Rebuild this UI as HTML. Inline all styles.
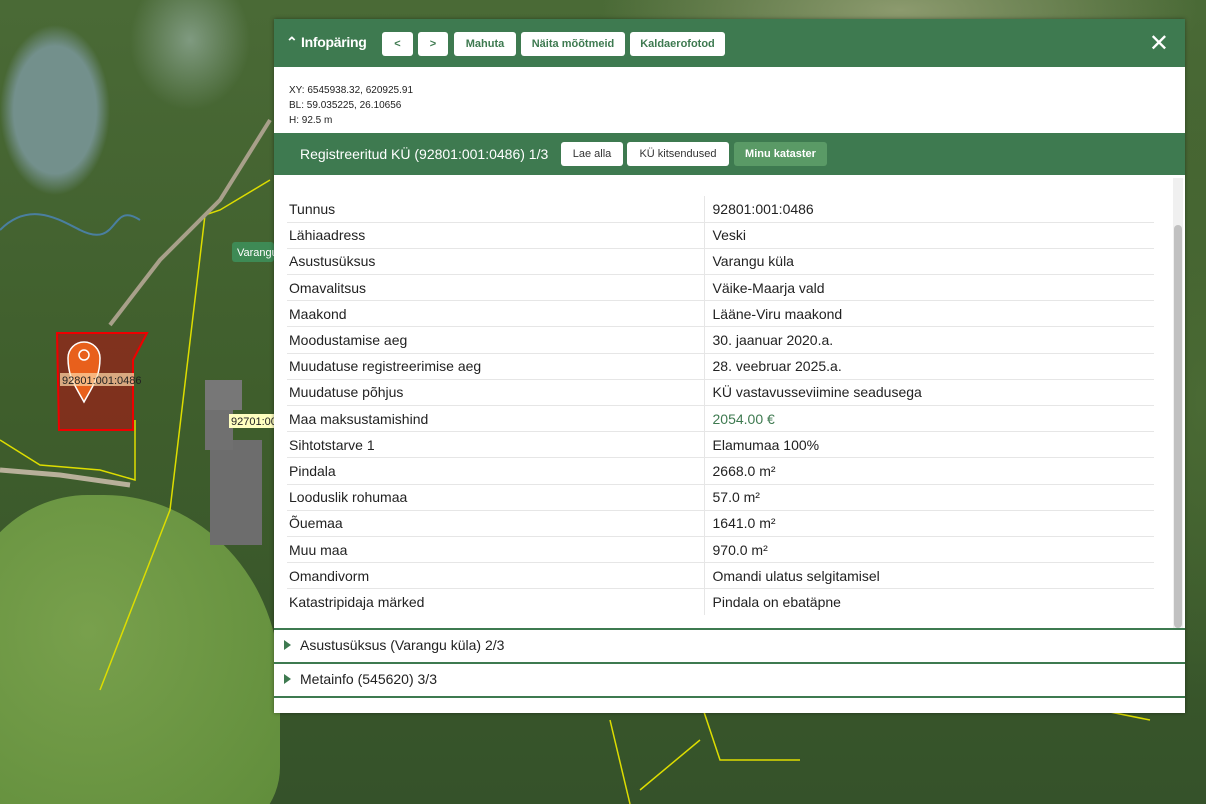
<!DOCTYPE html>
<html><head><meta charset="utf-8"><style>
*{margin:0;padding:0;box-sizing:border-box}
html,body{width:1206px;height:804px;overflow:hidden}
body{position:relative;font-family:"Liberation Sans",sans-serif;background:#3e5a2c}
.map{position:absolute;left:0;top:0;width:1206px;height:804px;overflow:hidden;background:
radial-gradient(ellipse 55px 85px at 55px 110px,#73908c 0,#73908c 75%,transparent 100%),
radial-gradient(ellipse 60px 70px at 190px 40px,#7f9a80 0,transparent 100%),
radial-gradient(ellipse 300px 90px at 900px 10px,#8c9a6e 0,transparent 100%),
radial-gradient(ellipse 90px 300px at 1200px 400px,#4a6a34 0,transparent 100%),
linear-gradient(180deg,#4a6a36,#3f5e2c 50%,#35522a)}
.field{position:absolute;left:-40px;top:495px;width:320px;height:340px;background:radial-gradient(ellipse at 40% 40%,#78a04c,#5f8c3a);border-radius:40% 55% 20% 10%}
.panel{position:absolute;left:274px;top:19px;width:911px;height:694px;background:#fff;box-shadow:0 0 4px rgba(0,0,0,.4)}
.hdr{height:48px;background:#3e7a50;position:relative}
.hdr .t{position:absolute;left:12px;top:15px;color:#fff;font-weight:bold;font-size:14px;letter-spacing:-.3px}
.btn{position:absolute;background:#fff;color:#3e7a50;font-size:11px;font-weight:bold;border-radius:3px;height:24px;line-height:24px;text-align:center}
.x{position:absolute;right:16px;top:10px;color:#fff;font-size:24px}
.info{height:66px;padding:16px 0 0 15px;font-size:10px;line-height:15px;color:#222}
.sub{height:42px;background:#3e7a50;position:relative}
.sub .t{position:absolute;left:26px;top:13px;color:#fff;font-size:14px}
table{position:absolute;left:13px;top:177px;width:867px;border-collapse:collapse;font-size:14px;color:#222}
td{height:26.2px;border-bottom:1px solid #e6e6e6;padding-left:2px}
td+td{border-left:1px solid #e6e6e6;padding-left:8px;width:450px}
tr:last-child td{border-bottom:none}
.sb{position:absolute;left:899px;top:159px;width:10px;height:450px;background:#f0f0f0}
.sb div{position:absolute;left:1px;top:47px;width:8px;height:403px;background:#c1c1c1;border-radius:4px}
.acc{position:absolute;left:0;width:911px;height:34px;border-top:2px solid #3e7a50;font-size:14px;color:#222;padding:7px 0 0 26px}
.acc:before{content:"";position:absolute;left:10px;top:10px;border-left:7px solid #3e7a50;border-top:5px solid transparent;border-bottom:5px solid transparent}
</style></head><body>
<div class="map">
<div class="field"></div>
<svg width="1206" height="804" style="position:absolute;left:0;top:0">
<polyline points="0,440 40,465 100,470 135,480 135,420" fill="none" stroke="#dddd00" stroke-width="1.5"/>
<polyline points="100,690 135,600 170,510 205,215 220,210 270,180" fill="none" stroke="#dddd00" stroke-width="1.5"/>
<polyline points="0,470 60,475 130,485" fill="none" stroke="#b8b09a" stroke-width="5"/>
<polyline points="110,325 160,260 220,200 270,120" fill="none" stroke="#a8a08a" stroke-width="4"/>
<path d="M0,230 C30,200 60,220 80,230 C120,250 110,200 140,220" fill="none" stroke="#4a7fa0" stroke-width="2"/>
<path d="M700,740 L640,790 M700,700 L720,760 L800,760 M610,720 L630,804 M1100,710 L1150,720" fill="none" stroke="#dddd00" stroke-width="1.5"/>
<polygon points="57,333 147,333 133,360 133,430 59,430" fill="rgba(170,20,20,.6)" stroke="#e00" stroke-width="2"/>
<rect x="205" y="380" width="37" height="30" fill="#777"/><rect x="210" y="440" width="52" height="105" fill="#6d6d6d"/><rect x="205" y="410" width="28" height="40" fill="#707070"/>
<path d="M84,402 C74,384 68,376 68,358 A16,16 0 0 1 100,358 C100,376 94,384 84,402Z" fill="#e8601c" stroke="#fff" stroke-width="1.5"/>
<circle cx="84" cy="355" r="5" fill="none" stroke="#fff" stroke-width="1.5"/>
<rect x="60" y="373" width="74" height="13" fill="rgba(255,220,170,.7)"/><text x="62" y="384" font-size="11" font-family="Liberation Sans" fill="#222">92801:001:0486</text>
<rect x="229" y="414" width="45" height="14" fill="#ffffc0"/><text x="231" y="425" font-size="11" font-family="Liberation Sans" fill="#222">92701:00</text>
<rect x="232" y="242" width="42" height="20" rx="3" fill="#3e8a55"/><text x="237" y="256" font-size="11" font-family="Liberation Sans" fill="#fff">Varangu</text>
</svg></div>
<div class="panel">
<div class="hdr"><div class="t">&#8963; Infopäring</div>
<div class="btn" style="left:108px;top:13px;width:31px">&lt;</div>
<div class="btn" style="left:144px;top:13px;width:30px">&gt;</div>
<div class="btn" style="left:180px;top:13px;width:62px">Mahuta</div>
<div class="btn" style="left:247px;top:13px;width:104px">Näita mõõtmeid</div>
<div class="btn" style="left:356px;top:13px;width:95px">Kaldaerofotod</div>
<div class="x">✕</div></div>
<div class="info">XY: 6545938.32, 620925.91<br>BL: 59.035225, 26.10656<br>H: 92.5 m</div>
<div class="sub"><div class="t">Registreeritud KÜ (92801:001:0486) 1/3</div>
<div class="btn" style="left:287px;top:9px;width:62px;color:#333;font-weight:normal">Lae alla</div>
<div class="btn" style="left:353px;top:9px;width:102px;color:#333;font-weight:normal">KÜ kitsendused</div>
<div class="btn" style="left:460px;top:9px;width:93px;background:#5a9a66;color:#fff">Minu kataster</div></div>
<table>
<tr><td>Tunnus</td><td>92801:001:0486</td></tr>
<tr><td>Lähiaadress</td><td>Veski</td></tr>
<tr><td>Asustusüksus</td><td>Varangu küla</td></tr>
<tr><td>Omavalitsus</td><td>Väike-Maarja vald</td></tr>
<tr><td>Maakond</td><td>Lääne-Viru maakond</td></tr>
<tr><td>Moodustamise aeg</td><td>30. jaanuar 2020.a.</td></tr>
<tr><td>Muudatuse registreerimise aeg</td><td>28. veebruar 2025.a.</td></tr>
<tr><td>Muudatuse põhjus</td><td>KÜ vastavusseviimine seadusega</td></tr>
<tr><td>Maa maksustamishind</td><td style="color:#3e7a50">2054.00 €</td></tr>
<tr><td>Sihtotstarve 1</td><td>Elamumaa 100%</td></tr>
<tr><td>Pindala</td><td>2668.0 m²</td></tr>
<tr><td>Looduslik rohumaa</td><td>57.0 m²</td></tr>
<tr><td>Õuemaa</td><td>1641.0 m²</td></tr>
<tr><td>Muu maa</td><td>970.0 m²</td></tr>
<tr><td>Omandivorm</td><td>Omandi ulatus selgitamisel</td></tr>
<tr><td>Katastripidaja märked</td><td>Pindala on ebatäpne</td></tr>
</table>
<div class="sb"><div></div></div>
<div class="acc" style="top:609px">Asustusüksus (Varangu küla) 2/3</div>
<div class="acc" style="top:643px">Metainfo (545620) 3/3</div>
<div style="position:absolute;left:0;top:677px;width:911px;border-top:2px solid #3e7a50"></div>
</div>
</body></html>
